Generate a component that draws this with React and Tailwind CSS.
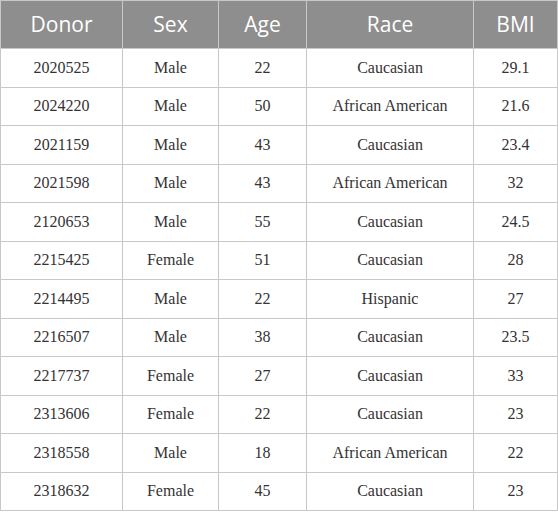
const rows = [
  ['2020525', 'Male', '22', 'Caucasian', '29.1'],
  ['2024220', 'Male', '50', 'African American', '21.6'],
  ['2021159', 'Male', '43', 'Caucasian', '23.4'],
  ['2021598', 'Male', '43', 'African American', '32'],
  ['2120653', 'Male', '55', 'Caucasian', '24.5'],
  ['2215425', 'Female', '51', 'Caucasian', '28'],
  ['2214495', 'Male', '22', 'Hispanic', '27'],
  ['2216507', 'Male', '38', 'Caucasian', '23.5'],
  ['2217737', 'Female', '27', 'Caucasian', '33'],
  ['2313606', 'Female', '22', 'Caucasian', '23'],
  ['2318558', 'Male', '18', 'African American', '22'],
  ['2318632', 'Female', '45', 'Caucasian', '23'],
];

const heads = ['Donor', 'Sex', 'Age', 'Race', 'BMI'];
const widths = ['w-[122px]', 'w-[96px]', 'w-[88px]', 'w-[167px]', 'w-[84px]'];

export default function App() {
  return (
    <div className="w-[558px] bg-white">
      <table className="w-[558px] table-fixed border-collapse">
        <thead>
          <tr className="h-[48px] bg-[#8e8e8e]">
            {heads.map((h, i) => (
              <th
                key={h}
                className={`${widths[i]} border border-[#c8c8c8] text-center font-['Open_Sans',sans-serif] text-[21px] font-normal text-white`}
              >
                {h}
              </th>
            ))}
          </tr>
        </thead>
        <tbody>
          {rows.map((r) => (
            <tr key={r[0]} className="h-[38.5px]">
              {r.map((c, i) => (
                <td
                  key={i}
                  className="border border-[#c8c8c8] text-center font-['Liberation_Serif',serif] text-[16px] text-[#333]"
                >
                  {c}
                </td>
              ))}
            </tr>
          ))}
        </tbody>
      </table>
    </div>
  );
}
